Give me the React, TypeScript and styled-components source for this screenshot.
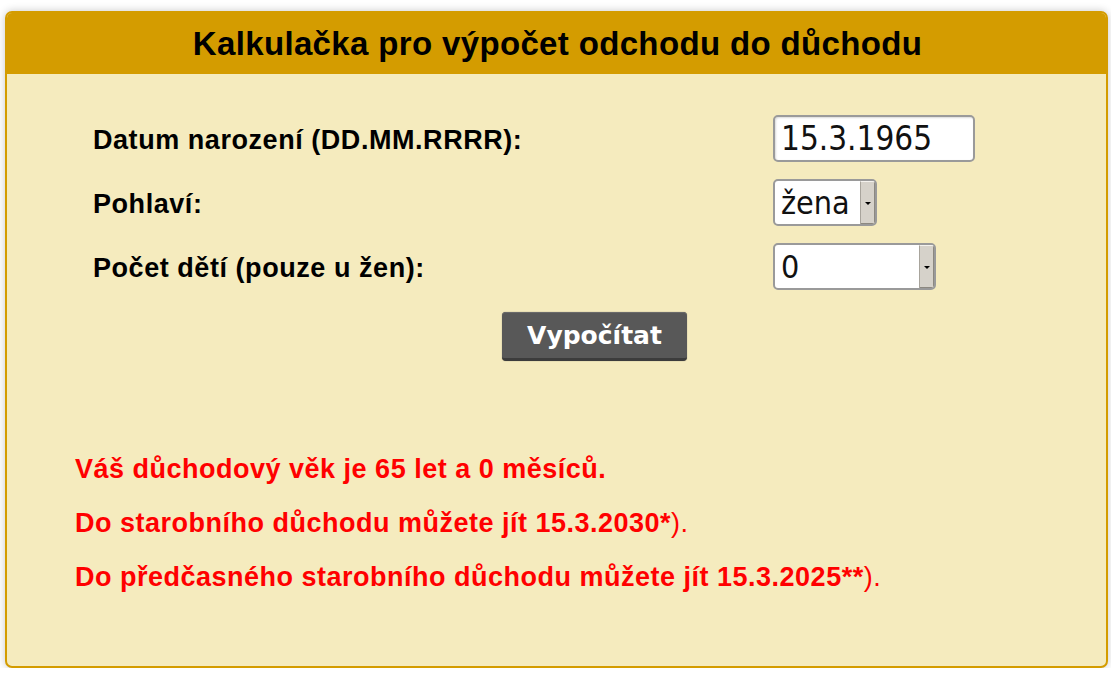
import React from 'react'
import styled, { createGlobalStyle } from 'styled-components'

const GlobalStyle = createGlobalStyle`
    html, body {
        margin: 0;
        padding: 0;
        background: #ffffff;
        font-family: 'Liberation Sans', Arial, sans-serif;
    }
`

const App = () => {
    return (
        <>
            <GlobalStyle />
            <Page>
                <Card>
                    <Header>Kalkulačka pro výpočet odchodu do důchodu</Header>
                    <Body>
                        <FormArea>
                            <Grid>
                                <Label>Datum narození (DD.MM.RRRR):</Label>
                                <TextInput defaultValue="15.3.1965" />

                                <Label>Pohlaví:</Label>
                                <SelectBox $width={104}>
                                    <Select defaultValue="zena">
                                        <option value="zena">žena</option>
                                        <option value="muz">muž</option>
                                    </Select>
                                    <Arrow><Tri /></Arrow>
                                </SelectBox>

                                <Label>Počet dětí (pouze u žen):</Label>
                                <SelectBox $width={163}>
                                    <Select defaultValue="0">
                                        <option value="0">0</option>
                                        <option value="1">1</option>
                                        <option value="2">2</option>
                                        <option value="3">3</option>
                                        <option value="4">4</option>
                                        <option value="5">5 a více</option>
                                    </Select>
                                    <Arrow><Tri /></Arrow>
                                </SelectBox>
                            </Grid>
                            <ButtonRow>
                                <Button>Vypočítat</Button>
                            </ButtonRow>
                        </FormArea>

                        <Results>
                            <Line>Váš důchodový věk je 65 let a 0 měsíců.</Line>
                            <Line>Do starobního důchodu můžete jít 15.3.2030*<Thin>).</Thin></Line>
                            <Line>Do předčasného starobního důchodu můžete jít 15.3.2025**<Thin>).</Thin></Line>
                        </Results>
                    </Body>
                </Card>
            </Page>
        </>
    )
}

// Page

const Page = styled.div`
    padding: 11px 3px 0 5px;
`

const Card = styled.div`
    width: 1103px;
    height: 657px;
    box-sizing: border-box;
    border: 2px solid #d49c00;
    border-radius: 7px;
    background-color: #f5ebbe;
    box-shadow: 0 0 8px rgba(0, 0, 0, 0.22);
    overflow: hidden;
    display: flex;
    flex-direction: column;
`

const Header = styled.div`
    background-color: #d49c00;
    height: 61px;
    display: flex;
    align-items: center;
    justify-content: center;
    font-size: 33px;
    letter-spacing: 0.35px;
    font-weight: bold;
    color: #000;
    padding-left: 2px;
`

// Form

const Body = styled.div`
    padding-top: 41px;
`

const FormArea = styled.div`
    padding: 0 10px 0 86px;
`

const Grid = styled.div`
    display: grid;
    grid-template-columns: 680px auto;
    row-gap: 17px;
    align-items: center;
    justify-items: start;
`

const Label = styled.div`
    font-size: 27px;
    letter-spacing: 0.55px;
    font-weight: bold;
    color: #000;
    padding-top: 4px;
`

const TextInput = styled.input`
    width: 202px;
    height: 47px;
    box-sizing: border-box;
    border: 2px solid #9a9a9a;
    border-radius: 5px;
    background: #fff;
    box-shadow: inset 1px 1px 2px rgba(0, 0, 0, 0.15);
    padding: 0 6px;
    font-family: 'DejaVu Sans Condensed', 'DejaVu Sans', sans-serif;
    font-stretch: condensed;
    font-size: 33px;
    color: #111;
    outline: none;
`

const SelectBox = styled.div<{ $width: number }>`
    width: ${p => p.$width}px;
    height: 47px;
    box-sizing: border-box;
    border: 2px solid #9a9a9a;
    border-radius: 5px;
    background: #fff;
    display: flex;
    overflow: hidden;
`

const Select = styled.select`
    flex: 1;
    min-width: 0;
    appearance: none;
    -webkit-appearance: none;
    border: 0;
    background: transparent;
    padding: 0 0 0 6px;
    font-family: 'DejaVu Sans Condensed', 'DejaVu Sans', sans-serif;
    font-stretch: condensed;
    font-size: 32px;
    color: #111;
    outline: none;
`

const Arrow = styled.div`
    width: 15px;
    box-sizing: border-box;
    background: #d6d2ca;
    border-left: 1px solid #a8a49c;
    border-top: 1px solid #f4f2ee;
    box-shadow: inset -1px -1px 0 #8c8880;
    display: flex;
    align-items: center;
    justify-content: center;
`

const Tri = styled.span`
    width: 0;
    height: 0;
    border-left: 3px solid transparent;
    border-right: 3px solid transparent;
    border-top: 3px solid #000;
    margin-top: 1px;
`

const ButtonRow = styled.div`
    display: flex;
    justify-content: center;
    margin-top: 22px;
`

const Button = styled.button`
    width: 185px;
    height: 49px;
    border: 0;
    border-radius: 4px;
    background-color: #585858;
    border-bottom: 3px solid #3c3c3c;
    box-shadow: inset 0 1px 0 #6a6a6a, 0 0 1px rgba(0, 0, 0, 0.5);
    color: #fff;
    font-family: 'DejaVu Sans', Verdana, sans-serif;
    font-weight: bold;
    font-size: 25px;
    padding: 0;
`

// Results

const Results = styled.div`
    margin-top: 93px;
    padding-left: 68px;
    display: flex;
    flex-direction: column;
    gap: 24px;
`

const Line = styled.div`
    font-size: 27px;
    letter-spacing: 0.5px;
    line-height: 30px;
    font-weight: bold;
    color: #ff0000;
`

const Thin = styled.span`
    font-weight: normal;
`

export default App
